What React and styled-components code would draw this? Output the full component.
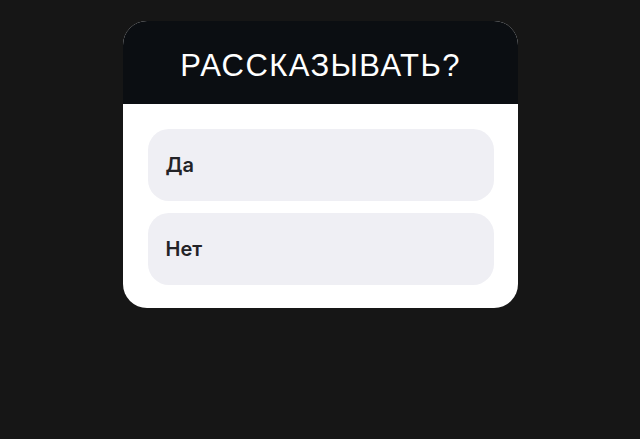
import React from "react";
import styled, { createGlobalStyle } from "styled-components";

const GlobalStyle = createGlobalStyle`
    html, body {
        margin: 0;
        padding: 0;
        background-color: #161616;
    }
    body {
        font-family: "Liberation Sans", Arial, sans-serif;
    }
`;

const Page = styled.div`
    width: 640px;
    height: 439px;
    display: flex;
    justify-content: center;
    align-items: flex-start;
    padding-top: 21px;
    box-sizing: border-box;
`;

const Card = styled.div`
    width: 395px;
    border-radius: 24px;
    overflow: hidden;
    background-color: #ffffff;
    display: flex;
    flex-direction: column;
`;

const Header = styled.div`
    height: 83px;
    box-sizing: border-box;
    padding-top: 27px;
    background-color: #0b0e12;
    text-align: center;
`;

const Question = styled.div`
    font-family: "Liberation Sans", Arial, sans-serif;
    font-size: 31px;
    line-height: 36px;
    color: #ffffff;
    letter-spacing: 1.4px;
    padding-left: 1px;
`;

const Options = styled.div`
    display: flex;
    flex-direction: column;
    gap: 12px;
    padding: 25px 24px 23px 25px;
`;

const Option = styled.div`
    height: 72px;
    border-radius: 21px;
    background-color: #efeff4;
    display: flex;
    align-items: center;
    padding-left: 18px;
    font-family: Inter, "Noto Sans", sans-serif;
    font-size: 20px;
    font-weight: 600;
    color: #232327;
`;

const answers = ["Да", "Нет"];

const App = () => {
    return (
        <>
            <GlobalStyle />
            <Page>
                <Card>
                    <Header>
                        <Question>РАССКАЗЫВАТЬ?</Question>
                    </Header>
                    <Options>
                        {answers.map((a) => (
                            <Option key={a}>{a}</Option>
                        ))}
                    </Options>
                </Card>
            </Page>
        </>
    );
};

export default App;
